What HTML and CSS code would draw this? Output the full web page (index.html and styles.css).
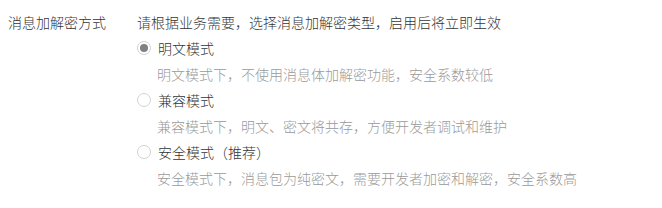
FILE: index.html
```html
<!DOCTYPE html>
<html lang="zh-CN">
<head>
    <meta charset="UTF-8">
    <title>消息加解密方式</title>
    <link rel="stylesheet" href="styles.css">
</head>
<body>
    <div class="form-row">
        <div class="form-label">消息加解密方式</div>
        <div class="form-field">
            <p class="hint">请根据业务需要，选择消息加解密类型，启用后将立即生效</p>
            <label class="option">
                <span class="radio checked"></span>
                <span>明文模式</span>
            </label>
            <p class="desc">明文模式下，不使用消息体加解密功能，安全系数较低</p>
            <label class="option">
                <span class="radio"></span>
                <span>兼容模式</span>
            </label>
            <p class="desc">兼容模式下，明文、密文将共存，方便开发者调试和维护</p>
            <label class="option">
                <span class="radio"></span>
                <span>安全模式（推荐）</span>
            </label>
            <p class="desc">安全模式下，消息包为纯密文，需要开发者加密和解密，安全系数高</p>
        </div>
    </div>
</body>
</html>
```

FILE: styles.css
```css
body {
    margin: 0;
    background: #fff;
    color: #333;
    font-family: "Microsoft YaHei", "Noto Sans CJK SC", sans-serif;
    font-size: 14px;
    font-weight: 300;
    line-height: 20px;
}
.form-row {
    display: flex;
    padding: 12px 8px;
}
.form-label {
    width: 129px;
    flex-shrink: 0;
    color: #333;
}
.form-field p {
    margin: 0;
}
.hint {
    color: #353535;
}
.option {
    display: flex;
    align-items: center;
    margin-top: 6px;
    color: #353535;
}
.radio {
    width: 12px;
    height: 12px;
    border: 1px solid #d2d2d2;
    border-radius: 50%;
    margin-right: 7px;
    display: flex;
    align-items: center;
    justify-content: center;
}
.radio.checked::after {
    content: "";
    width: 8px;
    height: 8px;
    border-radius: 50%;
    background: #808080;
}
.form-field .desc {
    margin: 6px 0 1px;
    padding-left: 20px;
    color: #9a9a9a;
}
```
